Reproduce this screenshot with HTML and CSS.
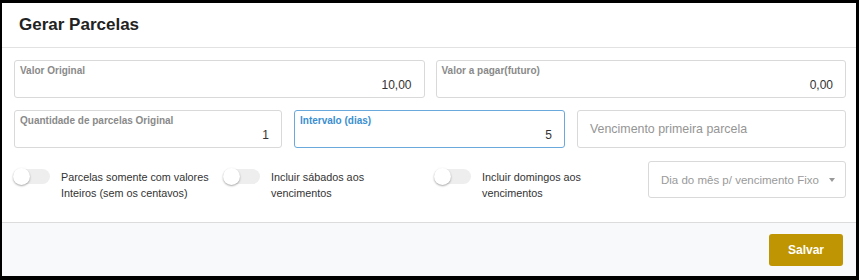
FILE: index.html
```html
<!DOCTYPE html>
<html lang="pt">
<head>
<meta charset="utf-8">
<link rel="stylesheet" href="styles.css">
</head>
<body>
<div class="modal">
  <div class="modal-header"><h1 class="title">Gerar Parcelas</h1></div>
  <div class="modal-body">
    <div class="row row-2">
      <div class="field"><span class="label">Valor Original</span><span class="value">10,00</span></div>
      <div class="field"><span class="label">Valor a pagar(futuro)</span><span class="value">0,00</span></div>
    </div>
    <div class="row row-3">
      <div class="field"><span class="label">Quantidade de parcelas Original</span><span class="value">1</span></div>
      <div class="field focus"><span class="label">Intervalo (dias)</span><span class="value">5</span></div>
      <div class="field plain"><span class="placeholder">Vencimento primeira parcela</span></div>
    </div>
    <div class="row row-opts">
      <div class="opt"><span class="toggle"><span class="knob"></span></span><span class="opt-text">Parcelas somente com valores<br>Inteiros (sem os centavos)</span></div>
      <div class="opt"><span class="toggle"><span class="knob"></span></span><span class="opt-text">Incluir sábados aos<br>vencimentos</span></div>
      <div class="opt"><span class="toggle"><span class="knob"></span></span><span class="opt-text">Incluir domingos aos<br>vencimentos</span></div>
      <div class="select"><span class="placeholder">Dia do mês p/ vencimento Fixo</span><span class="caret"></span></div>
    </div>
  </div>
  <div class="modal-footer"><button class="btn">Salvar</button></div>
</div>
</body>
</html>
```
FILE: styles.css
```css
* { box-sizing: border-box; }
html, body { margin: 0; }
body {
  background: #000;
  padding: 3px 3px 4px 2px;
  width: 859px;
  height: 280px;
  font-family: "Liberation Sans", Arial, sans-serif;
  color: #333;
}
.modal {
  background: #fff;
  width: 854px;
  height: 273px;
  display: flex;
  flex-direction: column;
}
.modal-header {
  height: 45px;
  border-bottom: 1px solid #e2e2e2;
  padding-left: 17px;
  display: flex;
  align-items: center;
}
.title {
  margin: 0;
  font-size: 17px;
  font-weight: bold;
  color: #222;
}
.modal-body {
  flex: 1;
  padding: 12px 10px 0 12px;
}
.row { display: grid; gap: 11px; }
.row-2 { grid-template-columns: 1fr 1fr; }
.row-3 { grid-template-columns: 268px 271px 1fr; gap: 12px; margin-top: 12px; }
.field {
  height: 38px;
  border: 1px solid #d9d9d9;
  border-radius: 3px;
  padding: 4px 12px 0 5px;
  display: flex;
  flex-direction: column;
}
.field.focus { border-color: #6aa9dc; }
.field.focus .label { color: #3b8fd0; }
.label {
  font-size: 10px;
  font-weight: bold;
  color: #8a8a8a;
  line-height: 12px;
  white-space: nowrap;
}
.value {
  text-align: right;
  font-size: 12px;
  line-height: 14px;
  margin-top: 1px;
  color: #333;
}
.field.plain {
  padding: 0 12px;
  justify-content: center;
}
.placeholder {
  font-size: 12.4px;
  color: #959595;
  white-space: nowrap;
}
.row-opts {
  margin-top: 13px;
  margin-left: -1px;
  grid-template-columns: 210px 211px 213px 1fr;
  gap: 0;
}
.opt {
  display: flex;
  align-items: flex-start;
  gap: 11px;
  padding-top: 8px;
}
.toggle {
  flex: none;
  width: 37px;
  height: 15px;
  border-radius: 8px;
  background: #eeeeee;
  position: relative;
}
.knob {
  position: absolute;
  left: 0;
  top: -1px;
  width: 17px;
  height: 17px;
  border-radius: 50%;
  background: #fff;
  box-shadow: 0 1px 2px rgba(0,0,0,0.35);
}
.opt-text {
  font-size: 10.8px;
  line-height: 16px;
  color: #333;
  white-space: nowrap;
}
.select {
  height: 37px;
  margin-left: 1px;
  border: 1px solid #d9d9d9;
  border-radius: 3px;
  padding: 0 10px 0 12px;
  display: flex;
  align-items: center;
  justify-content: space-between;
}
.select .placeholder { font-size: 11.5px; color: #9a9a9a; }
.caret {
  width: 0;
  height: 0;
  border-left: 3px solid transparent;
  border-right: 3px solid transparent;
  border-top: 4px solid #999;
}
.modal-footer {
  height: 54px;
  border-top: 1px solid #dcdcdc;
  background: #f8f9fa;
  display: flex;
  justify-content: flex-end;
  align-items: flex-start;
  padding: 11px 13px 0 0;
}
.btn {
  width: 74px;
  height: 32px;
  border: none;
  border-radius: 3px;
  background: #bf9503;
  color: #fff;
  font-family: "Liberation Sans", Arial, sans-serif;
  font-size: 12px;
  font-weight: bold;
}
```
